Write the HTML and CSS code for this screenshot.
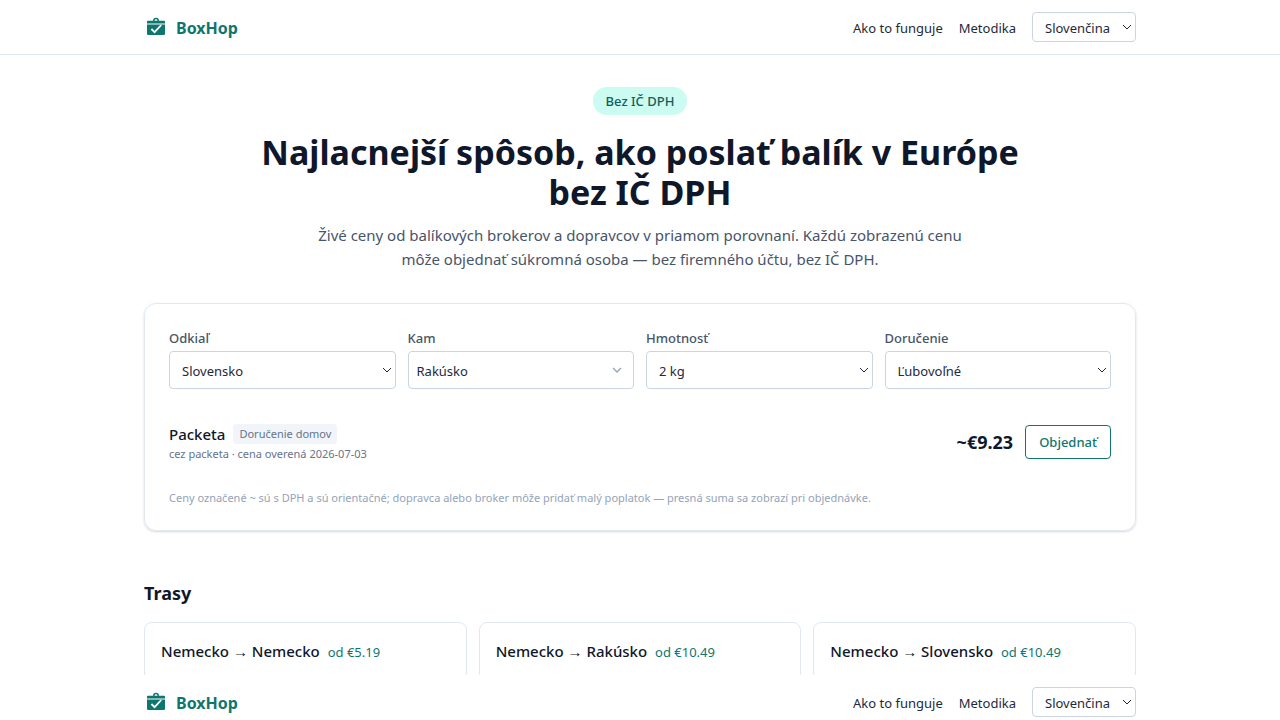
FILE: index.html
```html
<!DOCTYPE html>
<html lang="sk">
<head>
    <meta charset="UTF-8">
    <meta name="viewport" content="width=device-width, initial-scale=1.0">
    <title>BoxHop</title>
    <link rel="stylesheet" href="styles.css">
</head>
<body>
    <header class="site-header">
        <div class="header-inner">
            <a href="#" class="brand">
                <svg class="brand-icon" viewBox="0 0 24 24" aria-hidden="true">
                    <path d="M9.8 6V5.4a2.2 1.8 0 0 1 4.4 0V6" fill="none" stroke="#0f766e" stroke-width="1.5"/>
                    <path d="M3 6.6a.8.8 0 0 1 .8-.8h16.4a.8.8 0 0 1 .8.8v2H3z" fill="#0f766e"/>
                    <path d="M3 9.6h18v9.2a1.2 1.2 0 0 1-1.2 1.2H4.2A1.2 1.2 0 0 1 3 18.8z" fill="#0f766e"/>
                    <path d="m7.4 14 3.2 3.2L17.2 10" fill="none" stroke="#fff" stroke-width="1.8"/>
                </svg>
                <span>BoxHop</span>
            </a>
            <nav class="nav">
                <a href="#how">Ako to funguje</a>
                <a href="#method">Metodika</a>
                <select class="lang" aria-label="Jazyk">
                    <option>Slovenčina</option>
                </select>
            </nav>
        </div>
    </header>

    <main class="container">
        <section class="hero">
            <span class="pill">Bez IČ DPH</span>
            <h1>Najlacnejší spôsob, ako poslať balík v Európe bez IČ DPH</h1>
            <p>Živé ceny od balíkových brokerov a dopravcov v priamom porovnaní. Každú zobrazenú cenu môže objednať súkromná osoba — bez firemného účtu, bez IČ DPH.</p>
        </section>

        <section class="search-card">
            <form class="fields">
                <div class="field">
                    <label for="from">Odkiaľ</label>
                    <select id="from">
                        <option>Slovensko</option>
                    </select>
                </div>
                <div class="field">
                    <label for="to">Kam</label>
                    <div class="combo">
                        <input type="text" id="to" value="Rakúsko">
                        <svg class="combo-arrow" viewBox="0 0 10 10" aria-hidden="true">
                            <path d="m1 3 4 4 4-4" fill="none" stroke="#94a3b8" stroke-width="1.3"/>
                        </svg>
                    </div>
                </div>
                <div class="field">
                    <label for="weight">Hmotnosť</label>
                    <select id="weight">
                        <option>2 kg</option>
                    </select>
                </div>
                <div class="field">
                    <label for="delivery">Doručenie</label>
                    <select id="delivery">
                        <option>Ľubovoľné</option>
                    </select>
                </div>
            </form>

            <div class="offer">
                <div>
                    <div class="offer-title">
                        <span class="offer-name">Packeta</span>
                        <span class="tag">Doručenie domov</span>
                    </div>
                    <div class="offer-meta">cez packeta · cena overená 2026-07-03</div>
                </div>
                <div class="offer-action">
                    <span class="price">~€9.23</span>
                    <button type="button" class="order-btn">Objednať</button>
                </div>
            </div>

            <p class="note">Ceny označené ~ sú s DPH a sú orientačné; dopravca alebo broker môže pridať malý poplatok — presná suma sa zobrazí pri objednávke.</p>
        </section>

        <section>
            <h2>Trasy</h2>
            <div class="routes">
                <a href="#de-de" class="route">Nemecko <span class="arrow">→</span> Nemecko <span class="route-price">od €5.19</span></a>
                <a href="#de-at" class="route">Nemecko <span class="arrow">→</span> Rakúsko <span class="route-price">od €10.49</span></a>
                <a href="#de-sk" class="route">Nemecko <span class="arrow">→</span> Slovensko <span class="route-price">od €10.49</span></a>
            </div>
        </section>
    </main>

    <div class="bottom-bar">
        <div class="header-inner">
            <a href="#" class="brand">
                <svg class="brand-icon" viewBox="0 0 24 24" aria-hidden="true">
                    <path d="M9.8 6V5.4a2.2 1.8 0 0 1 4.4 0V6" fill="none" stroke="#0f766e" stroke-width="1.5"/>
                    <path d="M3 6.6a.8.8 0 0 1 .8-.8h16.4a.8.8 0 0 1 .8.8v2H3z" fill="#0f766e"/>
                    <path d="M3 9.6h18v9.2a1.2 1.2 0 0 1-1.2 1.2H4.2A1.2 1.2 0 0 1 3 18.8z" fill="#0f766e"/>
                    <path d="m7.4 14 3.2 3.2L17.2 10" fill="none" stroke="#fff" stroke-width="1.8"/>
                </svg>
                <span>BoxHop</span>
            </a>
            <nav class="nav">
                <a href="#how">Ako to funguje</a>
                <a href="#method">Metodika</a>
                <select class="lang" aria-label="Jazyk">
                    <option>Slovenčina</option>
                </select>
            </nav>
        </div>
    </div>
</body>
</html>
```
FILE: styles.css
```css
* {
    box-sizing: border-box;
}

body {
    margin: 0;
    font-family: "Noto Sans", "Open Sans", sans-serif;
    font-size: 15px;
    line-height: 24px;
    color: #1e293b;
    background: #fff;
}

h1, h2, p {
    margin: 0;
}

a {
    color: inherit;
    text-decoration: none;
}

select, input, button {
    font-family: inherit;
    font-size: 13px;
    line-height: 20px;
    color: #1e293b;
    background-color: #fff;
    border: 1px solid #cbd5e1;
    border-radius: 4px;
}

select {
    appearance: none;
    background-image: url("data:image/svg+xml,%3Csvg xmlns='http://www.w3.org/2000/svg' width='10' height='10'%3E%3Cpath d='m1 3 4 4 4-4' fill='none' stroke='%231e293b' stroke-width='1'/%3E%3C/svg%3E");
    background-repeat: no-repeat;
    background-position: right 3px center;
}

.site-header {
    background: #fff;
    border-bottom: 1px solid #e2e8f0;
}

.header-inner {
    display: flex;
    align-items: center;
    justify-content: space-between;
    max-width: 1024px;
    margin: 0 auto;
    padding: 12px 16px;
}

.brand {
    display: flex;
    align-items: center;
    gap: 8px;
    font-size: 16px;
    font-weight: 700;
    color: #0f766e;
}

.brand span,
.nav a {
    padding-top: 2px;
}

.brand-icon {
    width: 24px;
    height: 24px;
}

.nav {
    display: flex;
    align-items: center;
    gap: 16px;
    font-size: 13px;
    line-height: 20px;
}

.lang {
    height: 30px;
    padding: 5px 25px 3px 12px;
}

.container {
    max-width: 1024px;
    margin: 0 auto;
    padding: 32px 16px;
}

.hero {
    display: flex;
    flex-direction: column;
    align-items: center;
    margin-bottom: 32px;
    text-align: center;
}

.pill {
    padding: 4px 13px;
    font-size: 13px;
    line-height: 20px;
    font-weight: 500;
    color: #115e59;
    background: #ccfbf1;
    border-radius: 14px;
}

h1 {
    max-width: 768px;
    margin: 17px 0 11px;
    font-size: 34px;
    line-height: 40px;
    font-weight: 700;
    color: #0f172a;
}

.hero p {
    max-width: 672px;
    color: #475569;
}

.search-card {
    margin-bottom: 48px;
    padding: 24px;
    border: 1px solid #e2e8f0;
    border-radius: 12px;
    box-shadow: 0 1px 3px rgba(0, 0, 0, 0.1), 0 1px 2px rgba(0, 0, 0, 0.06);
}

.fields {
    display: grid;
    grid-template-columns: repeat(4, 1fr);
    gap: 12px;
}

.field label {
    display: block;
    margin-bottom: 3px;
    font-size: 13px;
    line-height: 20px;
    font-weight: 500;
    color: #475569;
}

.field select,
.field input {
    display: block;
    width: 100%;
    height: 38px;
    padding: 9px 8px 7px;
}

.field select {
    padding: 9px 24px 7px 12px;
}

.combo {
    position: relative;
}

.combo-arrow {
    position: absolute;
    top: 14px;
    right: 12px;
    width: 10px;
    height: 10px;
}

.offer {
    display: flex;
    align-items: center;
    justify-content: space-between;
    margin-top: 21px;
    padding: 12px 0;
}

.offer-title {
    display: flex;
    align-items: center;
    gap: 8px;
}

.offer-name {
    font-weight: 500;
    color: #0f172a;
}

.tag {
    padding: 2px 6px;
    font-size: 11px;
    line-height: 16px;
    color: #64748b;
    background: #f1f5f9;
    border-radius: 4px;
}

.offer-meta {
    font-size: 11px;
    line-height: 16px;
    color: #64748b;
}

.offer-action {
    display: flex;
    align-items: center;
    gap: 12px;
}

.price {
    font-size: 18px;
    line-height: 28px;
    font-weight: 700;
    color: #0f172a;
}

.order-btn {
    padding: 6px 13px;
    font-weight: 500;
    color: #0f766e;
    border-color: #0f766e;
    cursor: pointer;
}

.note {
    margin-top: 16px;
    font-size: 11px;
    line-height: 16px;
    color: #94a3b8;
}

h2 {
    margin-bottom: 15px;
    font-size: 18px;
    line-height: 28px;
    font-weight: 700;
    color: #0f172a;
}

.routes {
    display: grid;
    grid-template-columns: repeat(3, 1fr);
    gap: 12px;
}

.route {
    padding: 16px;
    font-weight: 500;
    color: #0f172a;
    border: 1px solid #e2e8f0;
    border-radius: 8px;
}

.route:hover {
    border-color: #0f766e;
}

.arrow {
    font-family: "Liberation Sans", sans-serif;
    font-weight: 400;
}

.route-price {
    margin-left: 4px;
    font-size: 13px;
    font-weight: 400;
    color: #0f766e;
}

/* compact bar pinned to the bottom edge */
.bottom-bar {
    position: fixed;
    right: 0;
    bottom: 0;
    left: 0;
    height: 45px;
    overflow: hidden;
    background: #fff;
}
```
